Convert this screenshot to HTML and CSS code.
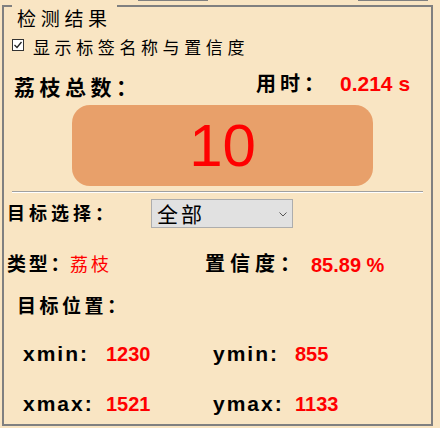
FILE: index.html
```html
<!DOCTYPE html>
<html lang="zh-CN">
<head>
<meta charset="utf-8">
<link rel="stylesheet" href="styles.css">
</head>
<body>
<div class="top-strip"><span class="stub stub-a"></span><span class="stub stub-b"></span></div>
<section class="group">
  <div class="group-head">
    <span class="edge edge-left"></span>
    <h2 class="group-title">检测结果</h2>
    <span class="edge edge-right"></span>
  </div>
  <label class="check-row">
    <span class="checkbox"><svg width="10" height="10" viewBox="0 0 10 10"><polyline points="1.5,5 4,7.5 8.5,2" fill="none" stroke="#222" stroke-width="1.3"/></svg></span>
    <span class="check-text">显示标签名称与置信度</span>
  </label>
  <div class="count-row">
    <span class="count-label">荔枝总数：</span>
    <span class="time-label">用时：</span>
    <span class="time-value">0.214 s</span>
  </div>
  <div class="count-box">10</div>
  <hr class="sep">
  <div class="select-row">
    <span class="select-label">目标选择：</span>
    <div class="select">
      <span class="select-text">全部</span>
      <svg class="chevron" width="8" height="5" viewBox="0 0 8 5"><polyline points="0.5,0.5 4,4 7.5,0.5" fill="none" stroke="#555" stroke-width="1"/></svg>
    </div>
  </div>
  <div class="type-row">
    <span class="type-label">类型：</span>
    <span class="type-value">荔枝</span>
    <span class="conf-label">置信度：</span>
    <span class="conf-value">85.89 %</span>
  </div>
  <div class="pos-title">目标位置：</div>
  <div class="coord-row">
    <span class="coord-label">xmin:</span>
    <span class="coord-value">1230</span>
    <span class="coord-label">ymin:</span>
    <span class="coord-value">855</span>
  </div>
  <div class="coord-row">
    <span class="coord-label">xmax:</span>
    <span class="coord-value">1521</span>
    <span class="coord-label">ymax:</span>
    <span class="coord-value">1133</span>
  </div>
</section>
</body>
</html>
```

FILE: styles.css
```css
html, body {
  margin: 0;
  padding: 0;
}
body {
  width: 440px;
  height: 428px;
  overflow: hidden;
  background: #F9E5C3;
  color: #000;
  font-family: "Noto Sans CJK SC", sans-serif;
  white-space: nowrap;
}
.top-strip {
  height: 5px;
  display: flex;
  align-items: flex-start;
}
.stub {
  height: 0;
  border-top: 1px solid #808080;
  width: 70px;
}
.stub-a { margin-left: 138px; }
.stub-b { margin-left: 150px; }

.group {
  margin-left: 2px;
  width: 431px;
  height: 421px;
  box-sizing: border-box;
  border: 2px solid #808080;
  border-top: none;
}
.group-head {
  display: flex;
  align-items: flex-start;
  height: 22px;
}
.edge {
  height: 0;
  border-top: 2px solid #808080;
}
.edge-left { width: 8px; }
.edge-right { flex: 1; }
.group-title {
  margin: 0;
  padding: 3px 5px 0 5px;
  font-size: 19px;
  line-height: 19px;
  font-weight: 400;
  letter-spacing: 4.7px;
}

.check-row {
  display: flex;
  align-items: flex-start;
  margin-top: 11px;
}
.checkbox {
  width: 12px;
  height: 12px;
  box-sizing: border-box;
  border: 1px solid #333;
  background: #fff;
  margin: 1px 0 0 8px;
  display: flex;
  align-items: center;
  justify-content: center;
}
.checkbox svg { display: block; }
.check-text {
  margin-left: 9px;
  font-size: 17px;
  line-height: 17px;
  letter-spacing: 4.6px;
}

.count-row {
  display: flex;
  align-items: flex-start;
  height: 24px;
  margin-top: 18px;
}
.count-label {
  flex: none;
  width: 242px;
  margin: 3px 0 0 10px;
  font-size: 21px;
  line-height: 21px;
  font-weight: 700;
  letter-spacing: 4.5px;
}
.time-label {
  flex: none;
  width: 84px;
  font-size: 20px;
  line-height: 20px;
  font-weight: 700;
  letter-spacing: 4px;
}
.time-value {
  font-family: "Liberation Sans", Arial, sans-serif;
  font-size: 21px;
  line-height: 21px;
  font-weight: 700;
  color: #FF0000;
}

.count-box {
  margin: 8px 0 0 68px;
  width: 301px;
  height: 81px;
  border-radius: 18px;
  background: #E8A06A;
  color: #FF0000;
  font-family: "Liberation Sans", Arial, sans-serif;
  font-size: 60px;
  line-height: 81px;
  text-align: center;
}

.sep {
  margin: 5px 0 0 8px;
  width: 411px;
  height: 0;
  border: none;
  border-top: 1px solid #A0A0A0;
  border-bottom: 1px solid #FFFFFF;
}

.select-row {
  display: flex;
  align-items: flex-start;
  margin-top: 6px;
}
.select-label {
  flex: none;
  width: 144px;
  margin: 4px 0 0 3px;
  font-size: 18px;
  line-height: 18px;
  font-weight: 700;
  letter-spacing: 4px;
}
.select {
  width: 142px;
  height: 29px;
  box-sizing: border-box;
  border: 1px solid #ADADAD;
  background: #E1E1E1;
  display: flex;
  align-items: center;
  justify-content: space-between;
  padding: 0 5px 0 5px;
}
.select-text {
  font-size: 21px;
  line-height: 21px;
  letter-spacing: 3px;
}
.chevron { display: block; margin-top: 2px; }

.type-row {
  display: flex;
  align-items: flex-start;
  height: 22px;
  margin-top: 25px;
}
.type-label {
  flex: none;
  width: 63px;
  margin-left: 3px;
  font-size: 19px;
  line-height: 19px;
  font-weight: 700;
  letter-spacing: 2.7px;
}
.type-value {
  flex: none;
  width: 135px;
  margin-top: 1px;
  font-size: 18px;
  line-height: 18px;
  color: #FF0000;
  letter-spacing: 3px;
}
.conf-label {
  flex: none;
  width: 106px;
  font-size: 20px;
  line-height: 20px;
  font-weight: 700;
  letter-spacing: 5px;
}
.conf-value {
  margin-top: 2px;
  font-family: "Liberation Sans", Arial, sans-serif;
  font-size: 20px;
  line-height: 20px;
  font-weight: 700;
  color: #FF0000;
}

.pos-title {
  margin: 20px 0 0 13px;
  font-size: 19px;
  line-height: 19px;
  font-weight: 700;
  letter-spacing: 3.5px;
}

.coord-row {
  display: grid;
  grid-template-columns: 83px 107px 82px auto;
  margin: 30px 0 0 19px;
  font-family: "Liberation Sans", Arial, sans-serif;
  font-weight: 700;
  line-height: 20px;
}
.coord-label {
  font-size: 21px;
  letter-spacing: 2px;
}
.coord-value {
  font-size: 20px;
  color: #FF0000;
}
```
